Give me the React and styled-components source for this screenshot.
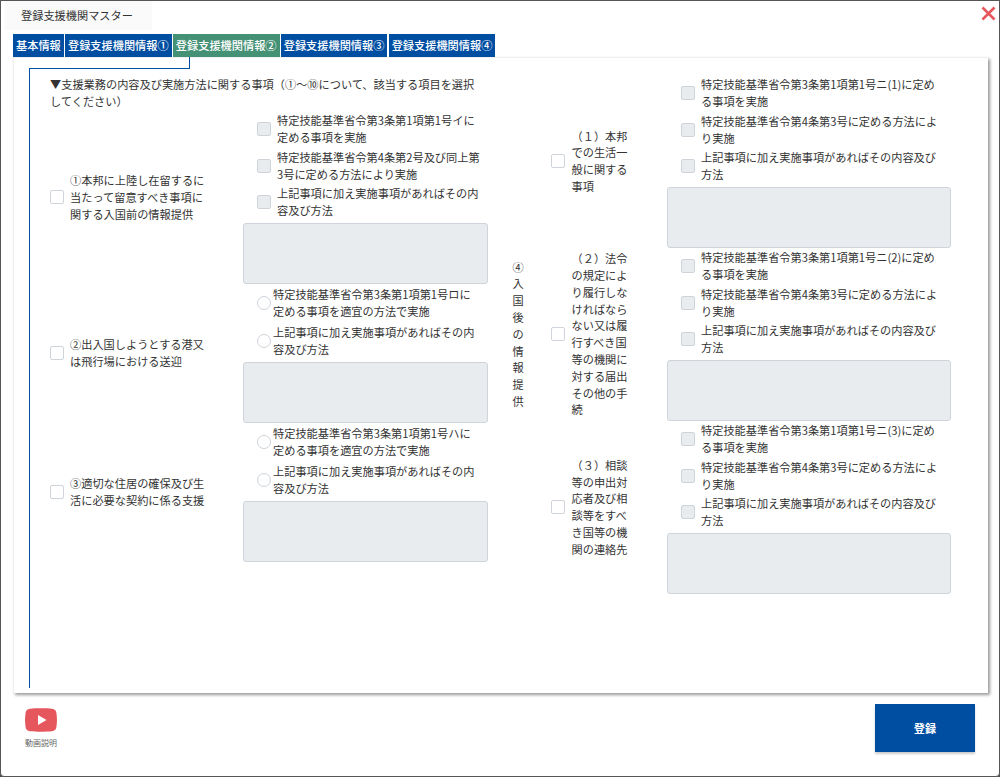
import React from 'react'
import styled, { createGlobalStyle } from 'styled-components'

const tabs = ['基本情報', '登録支援機関情報①', '登録支援機関情報②', '登録支援機関情報③', '登録支援機関情報④']

const leftRows = [
  {
    label: ['①本邦に上陸し在留するに', '当たって留意すべき事項に', '関する入国前の情報提供'],
    kind: 'checkbox',
    options: [
      ['特定技能基準省令第3条第1項第1号イに', '定める事項を実施'],
      ['特定技能基準省令第4条第2号及び同上第', '3号に定める方法により実施'],
      ['上記事項に加え実施事項があればその内', '容及び方法'],
    ],
  },
  {
    label: ['②出入国しようとする港又', 'は飛行場における送迎'],
    kind: 'radio',
    options: [
      ['特定技能基準省令第3条第1項第1号ロに', '定める事項を適宜の方法で実施'],
      ['上記事項に加え実施事項があればその内', '容及び方法'],
    ],
  },
  {
    label: ['③適切な住居の確保及び生', '活に必要な契約に係る支援'],
    kind: 'radio',
    options: [
      ['特定技能基準省令第3条第1項第1号ハに', '定める事項を適宜の方法で実施'],
      ['上記事項に加え実施事項があればその内', '容及び方法'],
    ],
  },
]

const rightOptions = (n) => [
  [`特定技能基準省令第3条第1項第1号ニ(${n})に定め`, 'る事項を実施'],
  ['特定技能基準省令第4条第3号に定める方法によ', 'り実施'],
  ['上記事項に加え実施事項があればその内容及び', '方法'],
]

const rightRows = [
  {
    label: ['（１）本邦', 'での生活一', '般に関する', '事項'],
    options: rightOptions(1),
  },
  {
    label: ['（２）法令', 'の規定によ', 'り履行しな', 'ければなら', 'ない又は履', '行すべき国', '等の機関に', '対する届出', 'その他の手', '続'],
    options: rightOptions(2),
  },
  {
    label: ['（３）相談', '等の申出対', '応者及び相', '談等をすべ', 'き国等の機', '関の連絡先'],
    options: rightOptions(3),
  },
]

function Lines({ lines }) {
  return lines.map((line, i) => (
    <React.Fragment key={i}>
      {i > 0 && <br />}
      {line}
    </React.Fragment>
  ))
}

function OptionGroup({ kind, options }) {
  const radio = kind === 'radio'
  return (
    <Options>
      {options.map((lines, i) => (
        <Option key={i} $radio={radio}>
          {radio ? <RadioBox type="radio" disabled /> : <CheckBox type="checkbox" disabled />}
          <span>
            <Lines lines={lines} />
          </span>
        </Option>
      ))}
      <Memo disabled />
    </Options>
  )
}

export default function App() {
  return (
    <>
      <GlobalStyle />
      <Modal>
        <CloseButton aria-label="閉じる">
          <svg width="15" height="15" viewBox="0 0 15 15">
            <path d="M1.5 1.5 13.5 13.5M13.5 1.5 1.5 13.5" stroke="#e5575c" strokeWidth="2.6" fill="none" />
          </svg>
        </CloseButton>
        <TitleTab>登録支援機関マスター</TitleTab>
        <TabBar>
          {tabs.map((tab, i) => (
            <Tab key={tab} $active={i === 2}>{tab}</Tab>
          ))}
        </TabBar>
        <Panel>
          <Frame>
            <LeftColumn>
              <Heading>
                ▼支援業務の内容及び実施方法に関する事項（①～⑩について、該当する項目を選択
                <br />
                してください）
              </Heading>
              {leftRows.map((row, i) => (
                <LeftRow key={i}>
                  <MainCheck type="checkbox" />
                  <RowLabel>
                    <Lines lines={row.label} />
                  </RowLabel>
                  <OptionGroup kind={row.kind} options={row.options} />
                </LeftRow>
              ))}
            </LeftColumn>
            <RightColumn>
              <VerticalLabel>④入国後の情報提供</VerticalLabel>
              <RightRows>
                {rightRows.map((row, i) => (
                  <RightRow key={i}>
                    <MainCheck type="checkbox" />
                    <RowLabel>
                      <Lines lines={row.label} />
                    </RowLabel>
                    <OptionGroup kind="checkbox" options={row.options} />
                  </RightRow>
                ))}
              </RightRows>
            </RightColumn>
          </Frame>
        </Panel>
        <Footer>
          <VideoLink>
            <svg width="32" height="24" viewBox="0 0 32 24">
              <path
                d="M5 .8C11 .2 21 .2 27 .8 30 1.1 31.2 2.6 31.5 5.5 32.1 9.5 32.1 14.5 31.5 18.5 31.2 21.4 30 22.9 27 23.2 21 23.8 11 23.8 5 23.2 2 22.9 .8 21.4 .5 18.5-.1 14.5-.1 9.5 .5 5.5 .8 2.6 2 1.1 5 .8Z"
                fill="#e5575c"
              />
              <path d="M13 7 21.5 12 13 17Z" fill="#fff" />
            </svg>
            <span>動画説明</span>
          </VideoLink>
          <SubmitButton>登録</SubmitButton>
        </Footer>
      </Modal>
    </>
  )
}

const GlobalStyle = createGlobalStyle`
  html, body {
    background: #4a4a4a;
    margin: 0;
    padding: 0;
  }

  body {
    color: #333;
    font-family: "Noto Sans CJK JP", "Noto Sans", sans-serif;
    font-size: 11.2px;
    line-height: 16.8px;
  }
`

const Modal = styled.div`
  background: #fff;
  border: 1px solid #555;
  border-radius: 0 0 4px 4px;
  box-sizing: border-box;
  height: 777px;
  position: relative;
  width: 1000px;
`

const CloseButton = styled.button`
  background: none;
  border: 0;
  height: 15px;
  padding: 0;
  position: absolute;
  right: 3px;
  top: 5px;
  width: 15px;
`

const TitleTab = styled.div`
  background: #fafafa;
  box-sizing: border-box;
  color: #333;
  font-size: 11.2px;
  height: 29px;
  line-height: 28px;
  margin-left: 4px;
  padding-left: 16px;
  width: 147px;
`

const TabBar = styled.div`
  display: flex;
  gap: 1.2px;
  margin: 4px 0 0 12px;
`

const Tab = styled.div`
  background: ${(p) => (p.$active ? '#459176' : '#004ea2')};
  color: #fff;
  font-size: 11.2px;
  font-weight: 500;
  height: 23px;
  line-height: 22px;
  padding: 0 3px;
  white-space: nowrap;
`

const Panel = styled.div`
  background: #fff;
  border-left: 1px solid #f0f0f0;
  border-top: 1px solid #f0f0f0;
  box-shadow: 2px 2px 3px #999;
  box-sizing: border-box;
  height: 636px;
  margin-left: 12px;
  padding: 10px 0 0 15px;
  width: 975px;
`

const Frame = styled.div`
  align-items: start;
  border-left: 1px solid #004ea2;
  box-sizing: border-box;
  display: grid;
  gap: 22px;
  grid-template-columns: 438px 441px;
  height: 620px;
  padding: 7px 0 0 20px;
  position: relative;

  &::before {
    background: #004ea2;
    content: "";
    height: 1px;
    left: -1px;
    position: absolute;
    top: 0;
    width: 161px;
  }

  &::after {
    background: #004ea2;
    content: "";
    height: 11px;
    left: 159px;
    position: absolute;
    top: -11px;
    width: 1px;
  }
`

const LeftColumn = styled.div`
  display: flex;
  flex-direction: column;
`

const Heading = styled.div`
  box-sizing: border-box;
  height: 36px;
  padding-top: 1px;
`

const LeftRow = styled.div`
  align-items: center;
  column-gap: 6px;
  display: grid;
  grid-template-columns: 14px 167px 245px;
`

const RightColumn = styled.div`
  align-items: center;
  display: flex;
  gap: 25px;
`

const VerticalLabel = styled.div`
  text-align: center;
  width: 16px;
  word-break: break-all;
`

const RightRows = styled.div`
  display: flex;
  flex-direction: column;
  gap: 0.5px;
`

const RightRow = styled.div`
  align-items: center;
  column-gap: 6.5px;
  display: grid;
  grid-template-columns: 14px 89px 284px;
`

const RowLabel = styled.div`
  white-space: nowrap;
`

const MainCheck = styled.input`
  appearance: none;
  background: #fff;
  border: 1px solid #ced4da;
  border-radius: 2px;
  box-sizing: border-box;
  height: 14px;
  margin: 0;
  width: 14px;
`

const CheckBox = styled(MainCheck)`
  background: #e9ecef;
`

const RadioBox = styled(MainCheck)`
  border-radius: 50%;
`

const Options = styled.div`
  display: flex;
  flex-direction: column;
`

const Option = styled.label`
  align-items: center;
  display: flex;
  gap: ${(p) => (p.$radio ? '2px' : '6px')};
  height: ${(p) => (p.$radio ? '38px' : '36.5px')};
  padding-left: 14px;
  white-space: nowrap;
`

const Memo = styled.textarea`
  background: #e9ecef;
  border: 1px solid #ced4da;
  border-radius: 3px;
  box-sizing: border-box;
  display: block;
  height: 61px;
  margin: 2px 0 0;
  resize: none;
  width: 100%;
`

const Footer = styled.div`
  align-items: flex-start;
  display: flex;
  justify-content: space-between;
  padding: 11px 24px 0 24px;
`

const VideoLink = styled.div`
  align-items: center;
  color: #666;
  display: flex;
  flex-direction: column;
  font-size: 8px;
  gap: 5px;
  line-height: 12px;
  margin-top: 4px;

  & svg {
    display: block;
  }
`

const SubmitButton = styled.button`
  background: #004ea2;
  border: 0;
  box-shadow: 0 2px 2px #ccc;
  color: #fff;
  font-family: inherit;
  font-size: 11.2px;
  font-weight: 700;
  height: 48px;
  padding: 0;
  width: 100px;
`
